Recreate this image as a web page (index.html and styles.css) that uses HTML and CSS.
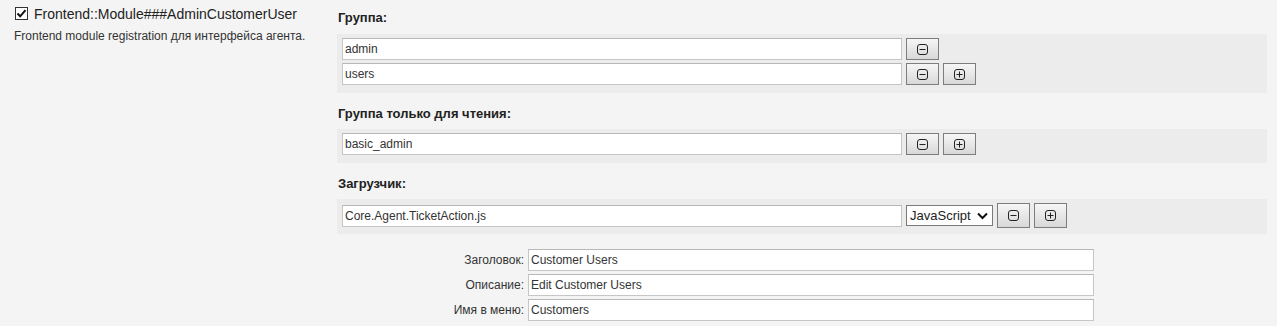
FILE: index.html
```html
<!DOCTYPE html>
<html lang="ru">
<head>
    <meta charset="UTF-8">
    <meta name="viewport" content="width=device-width, initial-scale=1.0">
    <title>Frontend::Module###AdminCustomerUser</title>
    <link rel="stylesheet" href="styles.css">
</head>
<body>
    <div class="setting">
        <div class="setting-info">
            <div class="setting-name">
                <svg class="check" width="13" height="13" viewBox="0 0 13 13">
                    <rect x="0.5" y="0.5" width="12" height="12" fill="#fff" stroke="#333"/>
                    <path d="M2.5 6.5 L5.2 9.3 L10.5 3.2" fill="none" stroke="#111" stroke-width="2"/>
                </svg>
                <span>Frontend::Module###AdminCustomerUser</span>
            </div>
            <p class="setting-desc">Frontend module registration для интерфейса агента.</p>
        </div>

        <div class="setting-body">
            <h3>Группа:</h3>
            <div class="panel">
                <div class="row">
                    <input type="text" class="text" value="admin">
                    <button type="button" class="btn"><svg width="11" height="11" viewBox="0 0 11 11"><rect x="0.5" y="0.5" width="10" height="10" rx="2.5" fill="none" stroke="#222"/><path d="M2.5 5.5 H8.5" stroke="#222"/></svg></button>
                </div>
                <div class="row">
                    <input type="text" class="text" value="users">
                    <button type="button" class="btn"><svg width="11" height="11" viewBox="0 0 11 11"><rect x="0.5" y="0.5" width="10" height="10" rx="2.5" fill="none" stroke="#222"/><path d="M2.5 5.5 H8.5" stroke="#222"/></svg></button>
                    <button type="button" class="btn"><svg width="11" height="11" viewBox="0 0 11 11"><rect x="0.5" y="0.5" width="10" height="10" rx="2.5" fill="none" stroke="#222"/><path d="M2.5 5.5 H8.5 M5.5 2.5 V8.5" stroke="#222"/></svg></button>
                </div>
            </div>

            <h3>Группа только для чтения:</h3>
            <div class="panel">
                <div class="row">
                    <input type="text" class="text" value="basic_admin">
                    <button type="button" class="btn"><svg width="11" height="11" viewBox="0 0 11 11"><rect x="0.5" y="0.5" width="10" height="10" rx="2.5" fill="none" stroke="#222"/><path d="M2.5 5.5 H8.5" stroke="#222"/></svg></button>
                    <button type="button" class="btn"><svg width="11" height="11" viewBox="0 0 11 11"><rect x="0.5" y="0.5" width="10" height="10" rx="2.5" fill="none" stroke="#222"/><path d="M2.5 5.5 H8.5 M5.5 2.5 V8.5" stroke="#222"/></svg></button>
                </div>
            </div>

            <h3>Загрузчик:</h3>
            <div class="panel panel-loader">
                <div class="row row-loader">
                    <input type="text" class="text" value="Core.Agent.TicketAction.js">
                    <span class="select-wrap">
                        <select class="select">
                            <option>JavaScript</option>
                            <option>CSS</option>
                        </select>
                        <svg class="chevron" width="11" height="8" viewBox="0 0 11 8"><path d="M1 1.5 L5.5 6 L10 1.5" fill="none" stroke="#111" stroke-width="2"/></svg>
                    </span>
                    <button type="button" class="btn btn-tall"><svg width="11" height="11" viewBox="0 0 11 11"><rect x="0.5" y="0.5" width="10" height="10" rx="2.5" fill="none" stroke="#222"/><path d="M2.5 5.5 H8.5" stroke="#222"/></svg></button>
                    <button type="button" class="btn btn-tall"><svg width="11" height="11" viewBox="0 0 11 11"><rect x="0.5" y="0.5" width="10" height="10" rx="2.5" fill="none" stroke="#222"/><path d="M2.5 5.5 H8.5 M5.5 2.5 V8.5" stroke="#222"/></svg></button>
                </div>
            </div>

            <div class="fields">
                <label class="field">
                    <span class="field-label">Заголовок:</span>
                    <input type="text" class="text text-field" value="Customer Users">
                </label>
                <label class="field">
                    <span class="field-label">Описание:</span>
                    <input type="text" class="text text-field" value="Edit Customer Users">
                </label>
                <label class="field">
                    <span class="field-label">Имя в меню:</span>
                    <input type="text" class="text text-field" value="Customers">
                </label>
            </div>
        </div>
    </div>
</body>
</html>
```

FILE: styles.css
```css
body {
    font-family: 'Liberation Sans', Arial, sans-serif;
    background-color: #f4f4f4;
    color: #333;
    margin: 0;
    padding: 0;
}
*, *::before, *::after {
    box-sizing: border-box;
}
.setting {
    display: flex;
    width: 1267px;
}
.setting-info {
    width: 337px;
    padding: 6px 0 0 14px;
}
.setting-name {
    display: flex;
    align-items: center;
    gap: 6px;
    font-size: 14px;
    color: #222;
    height: 15px;
    margin-left: 1px;
}
.check {
    flex: none;
}
.setting-desc {
    font-size: 12px;
    color: #333;
    margin: 8px 0 0;
}
.setting-body {
    flex: 1;
    padding-top: 10px;
}
h3 {
    font-size: 13px;
    line-height: 16px;
    font-weight: bold;
    color: #222;
    margin: 13px 0 7px 1px;
}
h3:first-child {
    margin-top: 0;
    margin-bottom: 8px;
}
.panel {
    background: #ececec;
    padding: 4px 5px 8px;
    display: flex;
    flex-direction: column;
    gap: 3px;
}
.panel-loader {
    padding-bottom: 6px;
}
.row {
    display: flex;
    align-items: center;
    gap: 4px;
}
.row-loader {
    height: 25px;
}
.text {
    width: 560px;
    height: 22px;
    border: 1px solid #c6c6c6;
    border-top-color: #b8b8b8;
    background: #fff;
    font-family: 'Liberation Sans', Arial, sans-serif;
    font-size: 12px;
    color: #333;
    padding: 0 2px;
    margin: 0;
    outline: none;
}
.btn {
    width: 33px;
    height: 22px;
    padding: 0;
    margin: 0;
    border: 1px solid #7d7d7d;
    background: linear-gradient(#f6f6f6, #d8d8d8);
    display: flex;
    align-items: center;
    justify-content: center;
    cursor: pointer;
}
.btn-tall {
    height: 25px;
}
.select-wrap {
    position: relative;
    display: block;
    height: 21px;
}
.select {
    appearance: none;
    width: 87px;
    height: 21px;
    border: 1px solid #7a7a7a;
    background: #fff;
    font-family: 'Liberation Sans', Arial, sans-serif;
    font-size: 13px;
    color: #222;
    padding: 0 0 0 3px;
    margin: 0;
    border-radius: 0;
}
.chevron {
    position: absolute;
    right: 5px;
    top: 7px;
    pointer-events: none;
}
.fields {
    margin-top: 15px;
    display: flex;
    flex-direction: column;
    gap: 3px;
}
.field {
    display: flex;
    align-items: center;
    gap: 4px;
}
.field-label {
    width: 187px;
    text-align: right;
    font-size: 12px;
    color: #333;
}
.text-field {
    width: 566px;
}
```
